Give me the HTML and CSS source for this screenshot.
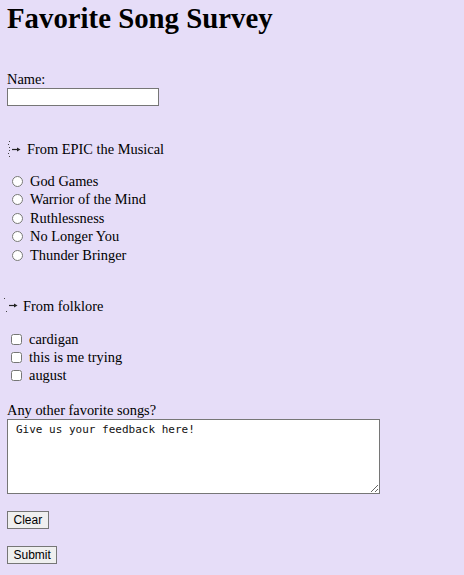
FILE: index.html
```html
<!DOCTYPE html>
<html>
<head>
<meta charset="utf-8">
<link rel="stylesheet" href="styles.css">
</head>
<body>
<h1 class="title">Favorite Song Survey</h1>
<form class="survey">
  <div class="name-block">
    <label for="name" class="field-label">Name:</label>
    <input type="text" id="name" class="name-input">
  </div>

  <div class="group group-epic">
    <div class="group-head">
      <svg class="marker" width="16" height="17" viewBox="0 0 16 17"><g fill="#444"><rect x="2" y="0" width="1" height="1"/><rect x="1" y="3" width="1" height="1"/><rect x="2" y="6" width="1" height="1"/><rect x="2" y="9" width="1" height="1"/><rect x="1" y="12" width="1" height="1"/><rect x="2" y="15" width="1" height="1"/></g><path d="M5 8.5h6" stroke="#222" stroke-width="1.2"/><path d="M10 6.5l3.5 2-3.5 2z" fill="#222"/></svg>
      <span>From EPIC the Musical</span>
    </div>
    <div class="options radios">
      <label class="opt"><input type="radio" name="epic"><span>God Games</span></label>
      <label class="opt"><input type="radio" name="epic"><span>Warrior of the Mind</span></label>
      <label class="opt"><input type="radio" name="epic"><span>Ruthlessness</span></label>
      <label class="opt"><input type="radio" name="epic"><span>No Longer You</span></label>
      <label class="opt"><input type="radio" name="epic"><span>Thunder Bringer</span></label>
    </div>
  </div>

  <div class="group group-folk">
    <div class="group-head">
      <svg class="marker" width="16" height="17" viewBox="0 0 16 17"><g fill="#444"><rect x="1" y="0" width="1" height="1"/><rect x="3" y="13" width="1" height="1"/></g><path d="M6 7.5h6" stroke="#222" stroke-width="1.2"/><path d="M11 5.5l3.5 2-3.5 2z" fill="#222"/></svg>
      <span>From folklore</span>
    </div>
    <div class="options checks">
      <label class="opt"><input type="checkbox"><span>cardigan</span></label>
      <label class="opt"><input type="checkbox"><span>this is me trying</span></label>
      <label class="opt"><input type="checkbox"><span>august</span></label>
    </div>
  </div>

  <div class="comments">
    <label for="more" class="field-label">Any other favorite songs?</label>
    <textarea id="more" class="feedback" placeholder="Give us your feedback here!"></textarea>
  </div>

  <div class="actions actions-clear">
    <button type="reset" class="btn">Clear</button>
  </div>
  <div class="actions actions-submit">
    <button type="submit" class="btn">Submit</button>
  </div>
</form>
</body>
</html>
```

FILE: styles.css
```css
html, body {
  background: #e6ddf8;
}
body {
  margin: 0;
  padding: 0 7px;
  font-family: "Liberation Serif", "Times New Roman", serif;
  font-size: 14.4px;
  color: #000;
}
.title {
  font-size: 28.8px;
  font-weight: bold;
  margin: 2px 0 0 0;
  line-height: 32px;
}
.survey {
  display: flex;
  flex-direction: column;
}
.field-label {
  display: block;
  line-height: 17px;
}
.name-block {
  margin-top: 37px;
}
.name-input {
  display: block;
  width: 152px;
  height: 18px;
  box-sizing: border-box;
  border: 1px solid #767676;
  background: #fff;
  margin: 0;
  padding: 1px 2px;
  font-size: 12px;
}
.group-head {
  display: flex;
  align-items: center;
  gap: 4px;
  height: 17px;
  line-height: 17px;
}
.marker {
  display: block;
  flex: none;
}
.group-epic {
  margin-top: 35px;
}
.group-folk {
  margin-top: 33px;
}
.group-folk .marker {
  margin-left: -4px;
}
.options {
  display: flex;
  flex-direction: column;
}
.radios {
  margin-top: 14px;
}
.radios .opt {
  height: 18.5px;
}
.checks {
  margin-top: 16px;
}
.checks .opt {
  height: 18px;
}
.opt {
  display: flex;
  align-items: center;
  gap: 7px;
  line-height: 17px;
}
.opt input {
  flex: none;
  width: 11px;
  height: 11px;
  margin: 0;
}
.radios .opt input {
  margin-left: 5px;
}
.checks .opt input {
  margin-left: 4px;
}
.comments {
  margin-top: 17px;
}
.feedback {
  display: block;
  width: 373px;
  height: 75px;
  box-sizing: border-box;
  margin: 0;
  border: 1px solid #767676;
  background: #fff;
  font-family: "DejaVu Sans Mono", "Liberation Mono", monospace;
  font-size: 11px;
  line-height: 13px;
  padding: 3px 8px;
  resize: both;
}
.feedback::placeholder {
  color: #111;
  opacity: 1;
}
.actions {
  margin-top: 17px;
  display: flex;
}
.btn {
  font-family: "Liberation Sans", Arial, sans-serif;
  font-size: 12px;
  line-height: 14px;
  padding: 0 5.5px;
  height: 18px;
  box-sizing: border-box;
  border: 1px solid #767676;
  background: #efefef;
  color: #000;
  border-radius: 0;
  margin: 0;
}
```
